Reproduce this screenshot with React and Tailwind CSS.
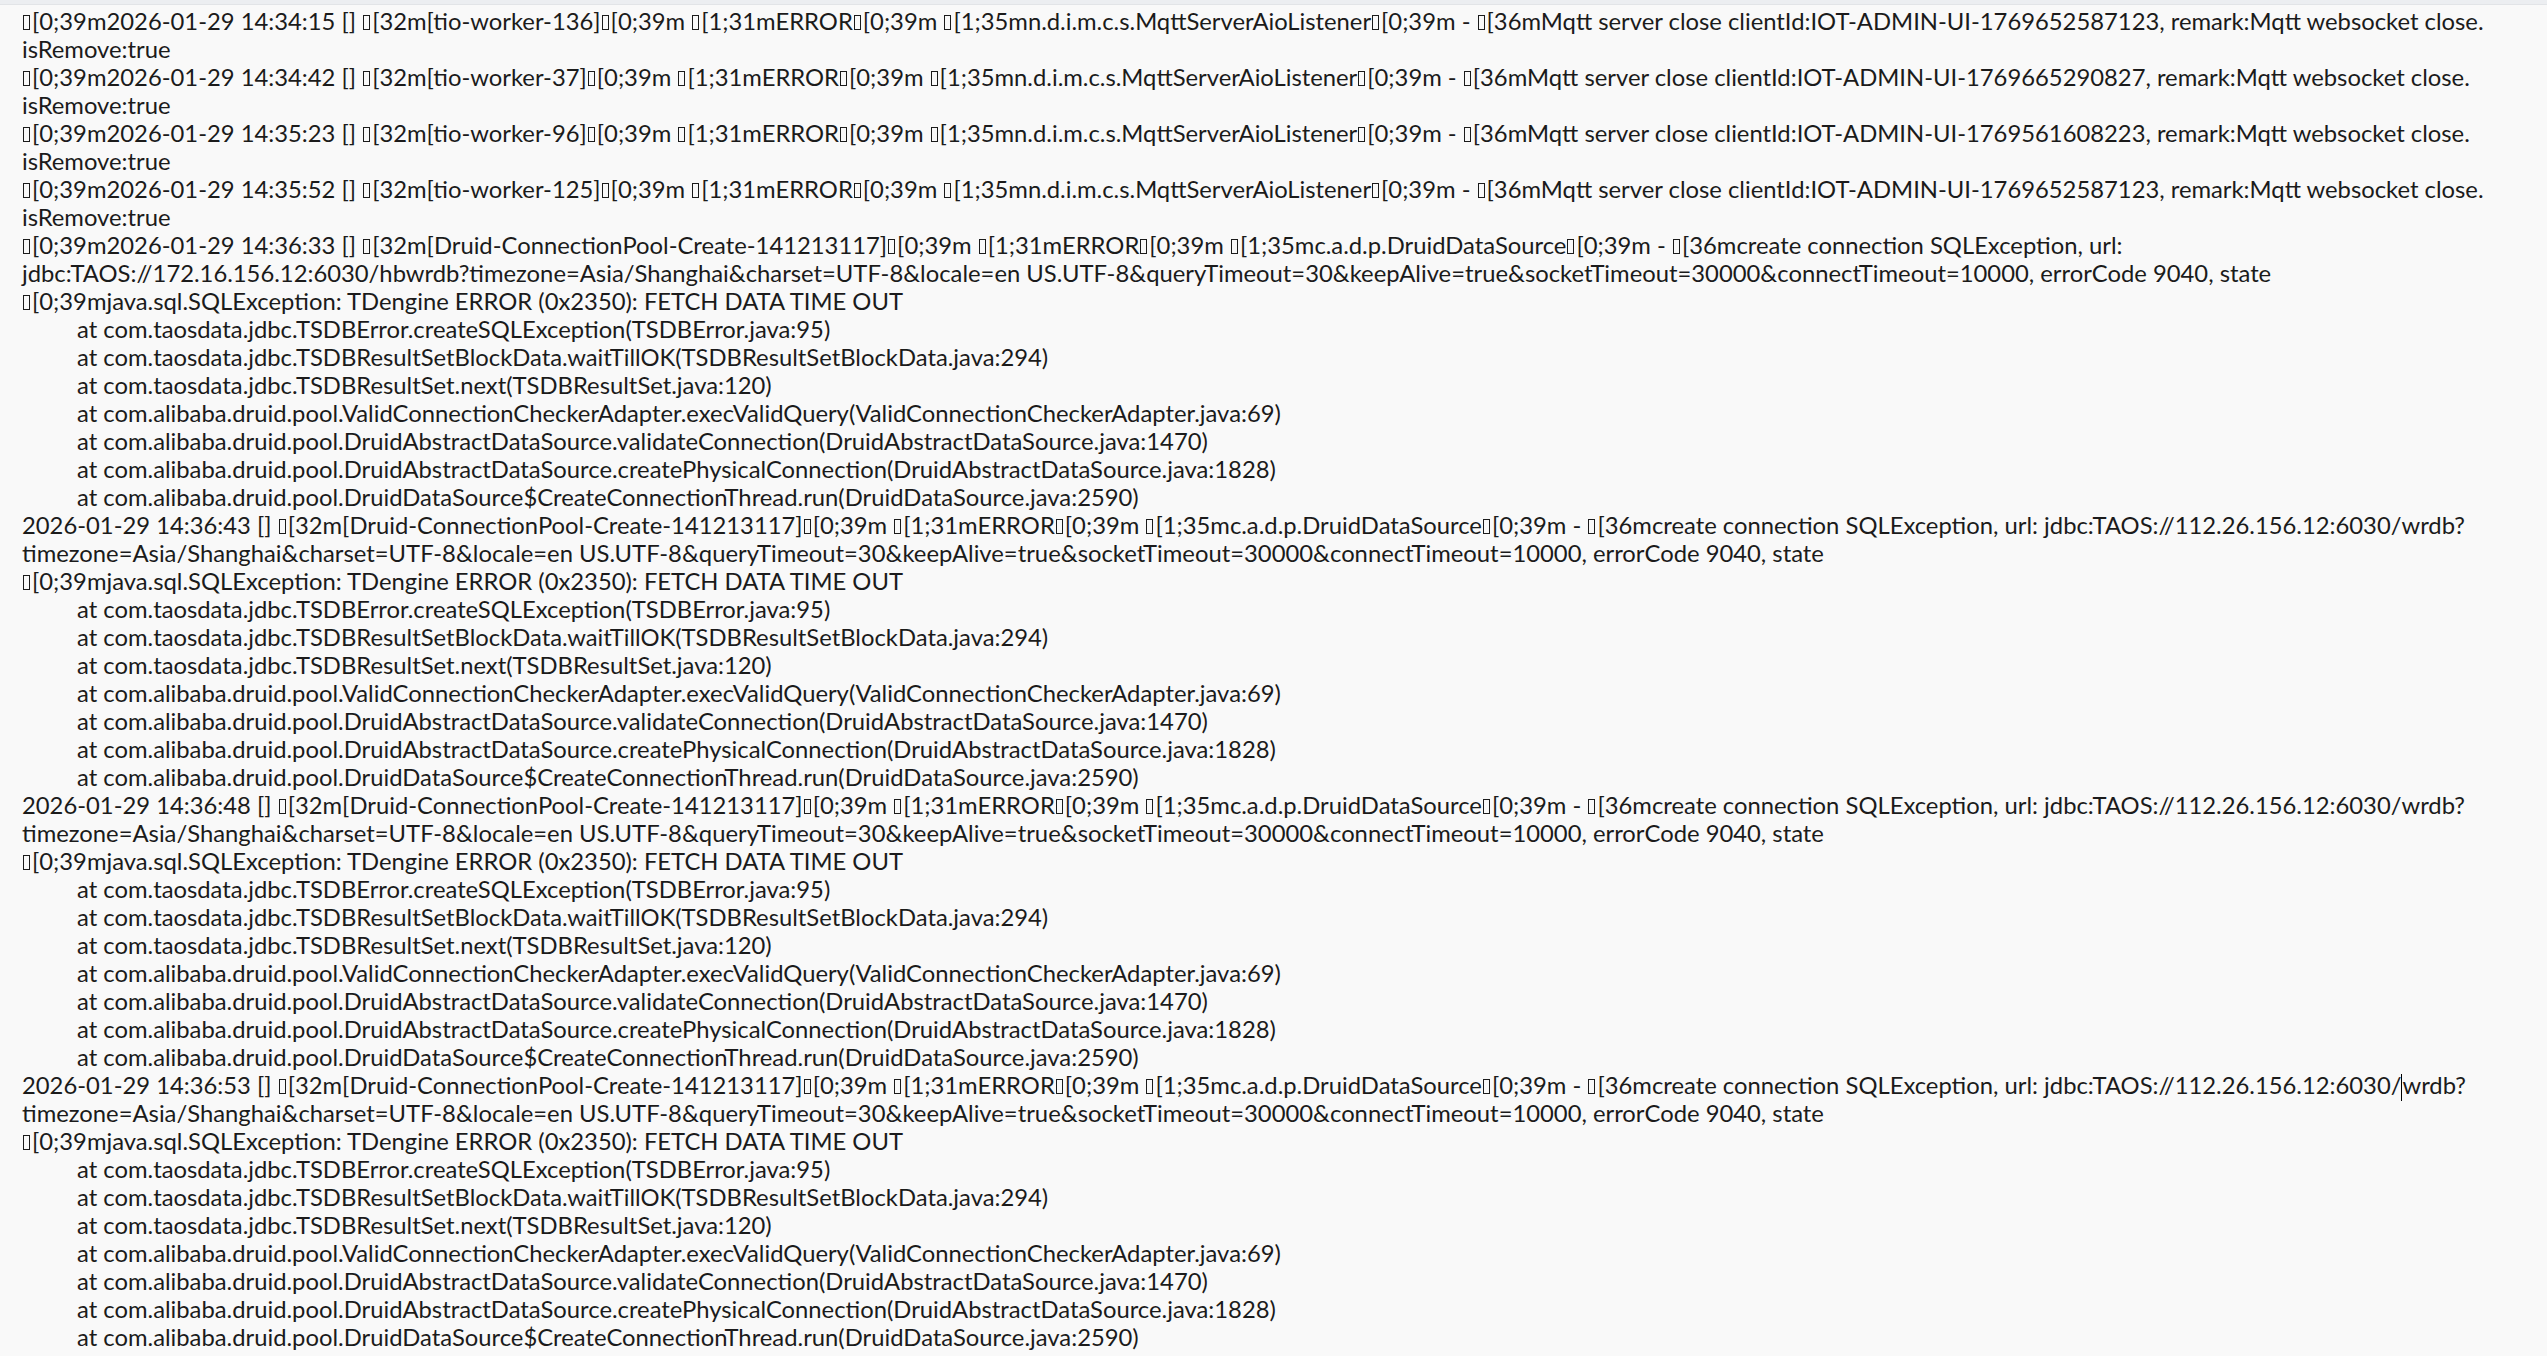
const ESC = '§'

const mqttClosed = [
  ['14:34:15', '136', '1769652587123'],
  ['14:34:42', '37', '1769665290827'],
  ['14:35:23', '96', '1769561608223'],
  ['14:35:52', '125', '1769652587123'],
]

const stack = [
  'at com.taosdata.jdbc.TSDBError.createSQLException(TSDBError.java:95)',
  'at com.taosdata.jdbc.TSDBResultSetBlockData.waitTillOK(TSDBResultSetBlockData.java:294)',
  'at com.taosdata.jdbc.TSDBResultSet.next(TSDBResultSet.java:120)',
  'at com.alibaba.druid.pool.ValidConnectionCheckerAdapter.execValidQuery(ValidConnectionCheckerAdapter.java:69)',
  'at com.alibaba.druid.pool.DruidAbstractDataSource.validateConnection(DruidAbstractDataSource.java:1470)',
  'at com.alibaba.druid.pool.DruidAbstractDataSource.createPhysicalConnection(DruidAbstractDataSource.java:1828)',
  'at com.alibaba.druid.pool.DruidDataSource$CreateConnectionThread.run(DruidDataSource.java:2590)',
]

const query =
  'timezone=Asia/Shanghai&charset=UTF-8&locale=en US.UTF-8&queryTimeout=30&keepAlive=true&socketTimeout=30000&connectTimeout=10000, errorCode 9040, state'
const sqlErr = `${ESC}[0;39mjava.sql.SQLException: TDengine ERROR (0x2350): FETCH DATA TIME OUT`
const druidHead = (time) =>
  `2026-01-29 ${time} [] ${ESC}[32m[Druid-ConnectionPool-Create-141213117]${ESC}[0;39m ${ESC}[1;31mERROR${ESC}[0;39m ${ESC}[1;35mc.a.d.p.DruidDataSource${ESC}[0;39m - ${ESC}[36mcreate connection SQLException, url: jdbc:TAOS://112.26.156.12:6030/wrdb?`

// visual lines as the editor wraps them
const lines = []
mqttClosed.forEach(([time, worker, id]) => {
  lines.push({
    text: `${ESC}[0;39m2026-01-29 ${time} [] ${ESC}[32m[tio-worker-${worker}]${ESC}[0;39m ${ESC}[1;31mERROR${ESC}[0;39m ${ESC}[1;35mn.d.i.m.c.s.MqttServerAioListener${ESC}[0;39m - ${ESC}[36mMqtt server close clientId:IOT-ADMIN-UI-${id}, remark:Mqtt websocket close.`,
  })
  lines.push({ text: 'isRemove:true' })
})
lines.push({
  text: `${ESC}[0;39m2026-01-29 14:36:33 [] ${ESC}[32m[Druid-ConnectionPool-Create-141213117]${ESC}[0;39m ${ESC}[1;31mERROR${ESC}[0;39m ${ESC}[1;35mc.a.d.p.DruidDataSource${ESC}[0;39m - ${ESC}[36mcreate connection SQLException, url:`,
})
lines.push({ text: 'jdbc:TAOS://172.16.156.12:6030/hbwrdb?' + query })
lines.push({ text: sqlErr })
stack.forEach((s) => lines.push({ text: s, indent: true }))
;['14:36:43', '14:36:48', '14:36:53'].forEach((time) => {
  lines.push({ text: druidHead(time), caret: time === '14:36:53' })
  lines.push({ text: query })
  lines.push({ text: sqlErr })
  stack.forEach((s) => lines.push({ text: s, indent: true }))
})
lines.push({ text: druidHead('14:36:58') })

function EscBox() {
  return <span className="inline-block w-[7px] h-[15px] border border-[#1b1b1b] ml-[1px] mr-[2px] align-baseline" />
}

function Segment({ text, caret }) {
  if (!caret || !text.includes('6030/')) return text
  const [before, after] = text.split('6030/')
  return (
    <>
      {before}6030/
      <span className="inline-block w-0 h-[27px] border-l border-black align-middle" />
      {after}
    </>
  )
}

function LogLine({ text, indent, caret }) {
  const parts = text.split(ESC)
  return (
    <div className={`h-[28px] leading-[28px] whitespace-pre ${indent ? 'pl-[77px]' : 'pl-[22px]'}`}>
      {parts.map((p, i) => (
        <span key={i}>
          {i > 0 && <EscBox />}
          <Segment text={p} caret={caret} />
        </span>
      ))}
    </div>
  )
}

export default function App() {
  return (
    <div className="h-screen overflow-hidden bg-[#f9f9f9] text-[#1b1b1b] text-[23.8px] font-[family-name:Lato,sans-serif]">
      <div className="h-[5px] bg-[#eceef1] border-b border-[#e2e4e7]" />
      <div className="pt-[2px]">
        {lines.map((l, i) => (
          <LogLine key={i} {...l} />
        ))}
      </div>
    </div>
  )
}
